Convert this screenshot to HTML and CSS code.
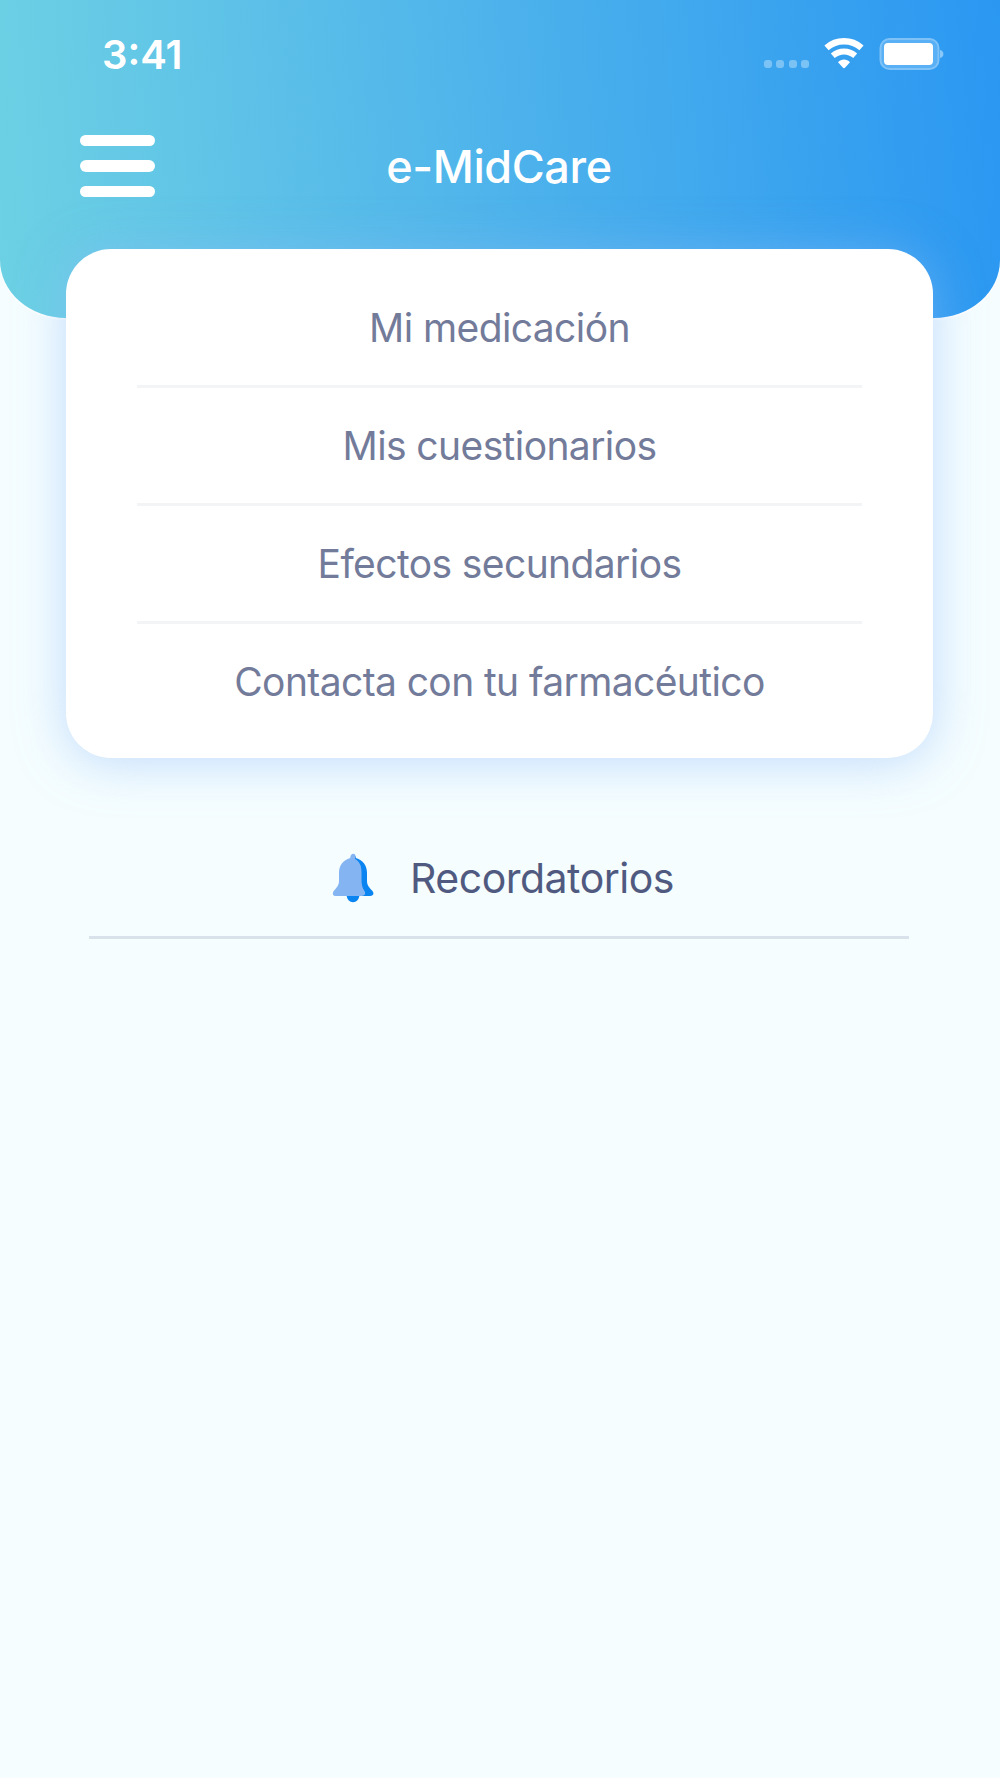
FILE: index.html
```
<!DOCTYPE html>
<html lang="es">
<head>
  <meta charset="UTF-8">
  <meta name="viewport" content="width=device-width, initial-scale=1.0">
  <title>e-MidCare</title>
  <link rel="stylesheet" href="styles.css">
</head>
<body>
  <header class="header">
    <div class="status-bar">
      <span class="time">3:41</span>
      <div class="status-icons">
        <div class="signal"><i></i><i></i><i></i><i></i></div>
        <svg class="wifi" width="42" height="32" viewBox="0 0 42 32" fill="none" stroke="#fff">
          <path d="M3.5 9.800C13.5 1 28.500 1 38.5 9.800" stroke-width="6.4" />
          <path d="M9.800 17.800C16.500 12 25.500 12 32.200 17.800" stroke-width="6" />
          <path d="M15 24.200C18.300 20.600 23.700 20.600 27 24.200L22.200 29.600Q21 30.800 19.800 29.600Z" fill="#fff" stroke="none" />
        </svg>
        <svg class="battery" width="66" height="34" viewBox="0 0 66 34">
          <rect x="1.5" y="2" width="58" height="30" rx="9" fill="#59b0f5" stroke="#7ec2f7" stroke-width="2" />
          <rect x="5" y="6" width="49" height="22" rx="4" fill="#fff" />
          <path d="M61 13C65.500 13.500 65.500 20.500 61 21Z" fill="#8ac8f8" />
        </svg>
      </div>
    </div>
    <div class="nav-bar">
      <button class="menu-button" aria-label="Menú"><span></span><span></span><span></span></button>
      <h1 class="title">e-MidCare</h1>
    </div>
  </header>

  <main>
    <nav class="menu-card">
      <a class="menu-item">Mi medicación</a>
      <a class="menu-item">Mis cuestionarios</a>
      <a class="menu-item">Efectos secundarios</a>
      <a class="menu-item">Contacta con tu farmacéutico</a>
    </nav>

    <section class="reminders">
      <svg class="bell" width="42" height="50" viewBox="0 0 42 50">
        <path d="M14.500 41H27.500C27.500 52 14.500 52 14.500 41Z" fill="#0a84f0" />
        <path d="M21 1C22.700 1 23.700 3 24 5C31 7 35 12.500 35 20V28C35 33 38 35 40.500 38C42.500 41 41 43 38 43H22Z" fill="#0a84f0" />
        <path d="M21 .8C19.200 .8 18.400 3 18.200 5C11 7 7 12.500 7 20V28C7 33 4 35 1.700 38C0 41 1 43 4 43H28C33 43 34 41 32.500 38C30 34 29.500 31 29.500 25V19C29.500 12 27 8 23 6C24.500 3 22.500 .8 21 .8Z" fill="#84b5f2" />
      </svg>
      <h2 class="reminders-title">Recordatorios</h2>
    </section>
  </main>
</body>
</html>
```
FILE: styles.css
```
* {
  box-sizing: border-box;
}

body {
  margin: 0;
  min-height: 1778px;
  background-color: #f5fdff;
  font-family: Inter, "Liberation Sans", sans-serif;
}

.header {
  height: 318px;
  background: linear-gradient(85deg, #6dd1e4 0%, #4eb3eb 50%, #2996f2 102%);
  border-radius: 0 0 66px 66px / 0 0 58px 58px;
  box-shadow: 0 2px 2px #fff;
  color: #fff;
}

.status-bar {
  display: flex;
  justify-content: space-between;
  align-items: center;
  height: 108px;
  padding: 0 55px 0 102px;
}

.time {
  font-size: 40px;
  font-weight: 600;
}

.status-icons {
  display: flex;
  align-items: center;
}

.signal {
  display: flex;
  gap: 4.5px;
  margin: 19px 14px 0 0;
}

.signal i {
  width: 8px;
  height: 8px;
  border-radius: 3px;
  background-color: #7cc3f5;
}

.wifi {
  margin-right: 14px;
}

.nav-bar {
  display: grid;
  grid-template-columns: 190px 1fr 190px;
  align-items: center;
  height: 116px;
}

.menu-button {
  display: flex;
  flex-direction: column;
  gap: 14px;
  width: 75px;
  margin-left: 80px;
  padding: 0;
  border: none;
  background: none;
}

.menu-button span {
  height: 11.5px;
  border-radius: 6px;
  background-color: #fff;
}

.title {
  margin: 0;
  padding-right: 2px;
  font-size: 45px;
  font-weight: 500;
  letter-spacing: -0.4px;
  text-align: center;
}

.menu-card {
  position: relative;
  height: 509px;
  margin: -69px 67px 0 66px;
  padding: 21px 71px;
  border-radius: 45px;
  background-color: #fff;
  box-shadow: 0 4px 48px rgba(142, 188, 248, 0.5);
}

.menu-item {
  display: flex;
  justify-content: center;
  align-items: center;
  height: 118px;
  border-bottom: 3px solid #f3f4f6;
  color: #737b9a;
  font-size: 39px;
  letter-spacing: -0.6px;
  white-space: nowrap;
}

.menu-item:last-child {
  height: 115px;
  border-bottom: none;
}

.reminders {
  display: flex;
  justify-content: center;
  align-items: center;
  gap: 36px;
  height: 123px;
  margin: 58px 91px 0 89px;
  padding: 3px 0 0 8px;
  border-bottom: 3px solid #d9e1ea;
}

.reminders-title {
  margin: 0;
  color: #505a80;
  font-size: 41px;
  font-weight: 400;
  letter-spacing: -0.5px;
}
```
